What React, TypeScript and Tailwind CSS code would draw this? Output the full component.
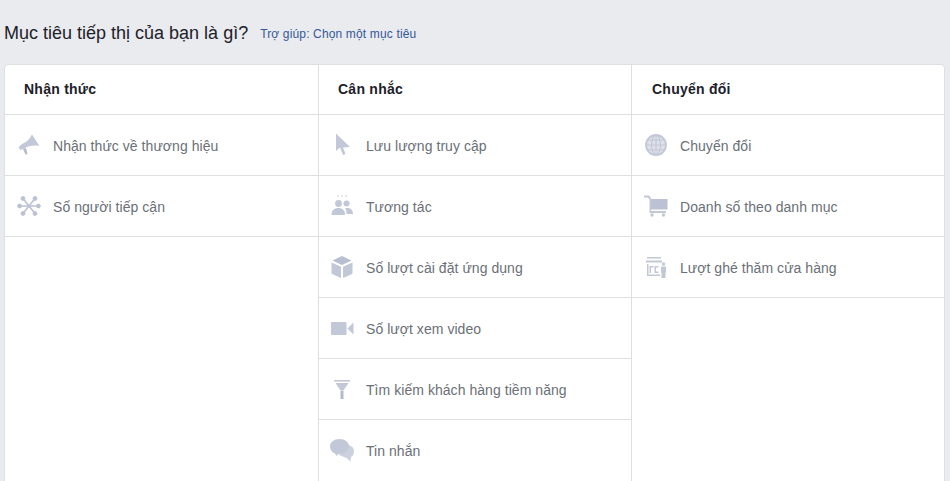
import React from 'react'

const Megaphone = () => (
  <svg viewBox="0 0 24 24" className="w-6 h-6" fill="#c3c8d9">
    <path d="M15 1.500 L22.500 13 C17 11.800 11 13 7 15.500 L3.500 17 C2 16 1.600 14 2.500 13 L6 10.500 C10 9 13 5.500 15 1.500 Z" />
    <path d="M6 16 L9 15 L10.500 21 L8.500 21.500 Z" fill="#b4bace" />
  </svg>
)

const Reach = () => (
  <svg viewBox="0 0 24 24" className="w-6 h-6" fill="#bcc2d4" stroke="#bcc2d4">
    <path d="M12 12 L6 4.500 M12 12 L18 4.500 M12 12 L3 12 M12 12 L21 12 M12 12 L6 19.500 M12 12 L18 19.500" strokeWidth="1.600" fill="none" />
    <circle cx="6" cy="4.500" r="1.900" />
    <circle cx="18" cy="4.500" r="1.900" />
    <circle cx="2.600" cy="12" r="1.900" />
    <circle cx="21.400" cy="12" r="1.900" />
    <circle cx="6" cy="19.500" r="1.900" />
    <circle cx="18" cy="19.500" r="1.900" />
  </svg>
)

const Cursor = () => (
  <svg viewBox="0 0 24 24" className="w-6 h-6" fill="#c3c8d9">
    <path d="M6 0.500 L6 18 L10 14.500 L13 22 L15.500 21 L13 14.500 L20 14 Z" />
  </svg>
)

const People = () => (
  <svg viewBox="0 0 24 24" className="w-6 h-6" fill="#c3c8d9">
    <circle cx="8" cy="2" r="0.800" />
    <circle cx="12" cy="2" r="0.800" />
    <circle cx="16" cy="2" r="0.800" />
    <circle cx="8.500" cy="9.500" r="3.400" />
    <circle cx="16.500" cy="9.500" r="3" />
    <path d="M1.500 21 C1.500 16 4.500 14 8.500 14 C12.500 14 15 16 15 21 Z" />
    <path d="M16 14 C20 13.600 23 15.500 23 20 L16.500 20 C16.500 17.500 16.200 15.500 15 14.500 Z" />
  </svg>
)

const Box = () => (
  <svg viewBox="0 0 24 24" className="w-6 h-6" fill="#c3c8d9">
    <path d="M12 1 L21.500 5.500 L12 10 L2.500 5.500 Z" fill="#b9bfd2" />
    <path d="M1.500 7.500 L11 11.800 L11 23 L3 19.500 C2 19 1.500 18.400 1.500 17.400 Z" />
    <path d="M22.500 7.500 L13 11.800 L13 23 L21 19.500 C22 19 22.500 18.400 22.500 17.400 Z" />
  </svg>
)

const Video = () => (
  <svg viewBox="0 0 24 24" className="w-6 h-6" fill="#c3c8d9">
    <rect x="1" y="6" width="15.500" height="13" rx="1" />
    <path d="M23.500 6.500 L23.500 18.500 L17.500 12.500 Z" />
  </svg>
)

const Funnel = () => (
  <svg viewBox="0 0 24 24" className="w-6 h-6" fill="#c3c8d9">
    <rect x="4" y="3" width="16" height="1.600" />
    <path d="M5.500 6 L18.500 6 L13.800 13 L10.200 13 Z" />
    <path d="M10.500 13.500 L13.500 13.500 L13.500 22 L10.500 22 Z" fill="#b4bace" />
  </svg>
)

const Chat = () => (
  <svg viewBox="0 0 24 24" className="w-6 h-6" fill="#c3c8d9">
    <path d="M17 7 C21 7 24 9.500 24 13 C24 16 23 18 21 19 L20.500 23.500 L16.500 20 L9 17 Z" fill="#cdd1df" />
    <path d="M9.500 1 C15 1 19 4.200 19 8.500 C19 12.800 15 16 9.500 16 L8 16 L6.500 18 L5 15.500 C2 14.500 0 11.800 0 8.500 C0 4.200 4 1 9.500 1 Z" />
  </svg>
)

const Globe = () => (
  <svg viewBox="0 0 24 24" className="w-6 h-6" fill="none" stroke="#c3c8d6" strokeWidth="1.200">
    <circle cx="12" cy="12" r="10" fill="#dfe1ea" strokeWidth="1.800" />
    <ellipse cx="12" cy="12" rx="4.500" ry="10" />
    <path d="M12 2 L12 22 M2 12 L22 12 M3.500 7 L20.500 7 M3.500 17 L20.500 17" />
  </svg>
)

const Cart = () => (
  <svg viewBox="0 0 24 24" className="w-6 h-6" fill="#c3c8d9">
    <path d="M0 1.500 L5 1.500 L7 4 L7 17 L22 17 L22 19 L5.500 19 L5.500 5 L3.500 3.500 L0 3.500 Z" />
    <rect x="7" y="5" width="16.500" height="10.500" fill="#bcc2d4" />
    <circle cx="8" cy="21" r="1.700" />
    <circle cx="19.500" cy="21" r="1.700" />
  </svg>
)

const Store = () => (
  <svg viewBox="0 0 24 24" className="w-6 h-6" fill="#c3c8d9">
    <rect x="3" y="2" width="14" height="1.500" />
    <rect x="2" y="5.500" width="16" height="2" />
    <path d="M3 9 H4.500 V19.500 H3 Z M3 19.500 H16 V21 H3 Z M5.500 11 H9.500 V12.500 H7 V18 H5.500 Z M10.500 11 H14.500 V12.500 H12 V16.500 H14.500 V18 H10.500 Z" />
    <circle cx="19.500" cy="9" r="1.800" />
    <path d="M17 11.500 H22 V17.500 H21.500 V23 H17.500 V17.500 H17 Z" />
  </svg>
)

const columns = [
  {
    title: 'Nhận thức',
    head: 'pl-[19px]',
    row: 'pl-3',
    items: [
      { label: 'Nhận thức về thương hiệu', icon: <Megaphone /> },
      { label: 'Số người tiếp cận', icon: <Reach /> },
    ],
  },
  {
    title: 'Cân nhắc',
    head: 'pl-[19px]',
    row: 'pl-[11px]',
    items: [
      { label: 'Lưu lượng truy cập', icon: <Cursor /> },
      { label: 'Tương tác', icon: <People /> },
      { label: 'Số lượt cài đặt ứng dụng', icon: <Box /> },
      { label: 'Số lượt xem video', icon: <Video /> },
      { label: 'Tìm kiếm khách hàng tiềm năng', icon: <Funnel /> },
      { label: 'Tin nhắn', icon: <Chat /> },
    ],
  },
  {
    title: 'Chuyển đổi',
    head: 'pl-5',
    row: 'pl-3',
    items: [
      { label: 'Chuyển đổi', icon: <Globe /> },
      { label: 'Doanh số theo danh mục', icon: <Cart /> },
      { label: 'Lượt ghé thăm cửa hàng', icon: <Store /> },
    ],
  },
]

export default function App() {
  return (
    <div className="h-[481px] w-[950px] overflow-hidden bg-[#e9ebee] font-['Liberation_Sans',Arial,sans-serif]">
      {/* Heading */}
      <div className="h-16 flex items-center pl-1 pt-0.5">
        <h1 className="text-[18px] text-[#1d2129] font-normal">Mục tiêu tiếp thị của bạn là gì?</h1>
        <a className="ml-3 pt-0.5 text-xs tracking-[0.15px] text-[#365899]">Trợ giúp: Chọn một mục tiêu</a>
      </div>

      {/* Objectives table */}
      <div className="ml-1 w-[941px] h-[440px] bg-white border border-[#dddfe2] rounded grid grid-cols-[314px_313px_1fr]">
        {columns.map((col, i) => (
          <div key={col.title} className={i < 2 ? 'border-r border-[#dddfe2]' : ''}>
            <div className={`h-[50px] flex items-center pb-0.5 border-b border-[#dddfe2] text-sm font-bold tracking-[0.25px] text-[#1d2129] ${col.head}`}>
              {col.title}
            </div>
            {col.items.map((item) => (
              <div
                key={item.label}
                className={`h-[61px] flex items-center gap-3 border-b border-[#dddfe2] nth-7:border-transparent text-sm tracking-[0.05px] text-[#6b7077] ${col.row}`}
              >
                {item.icon}
                <span className="pt-0.5">{item.label}</span>
              </div>
            ))}
          </div>
        ))}
      </div>
    </div>
  )
}
